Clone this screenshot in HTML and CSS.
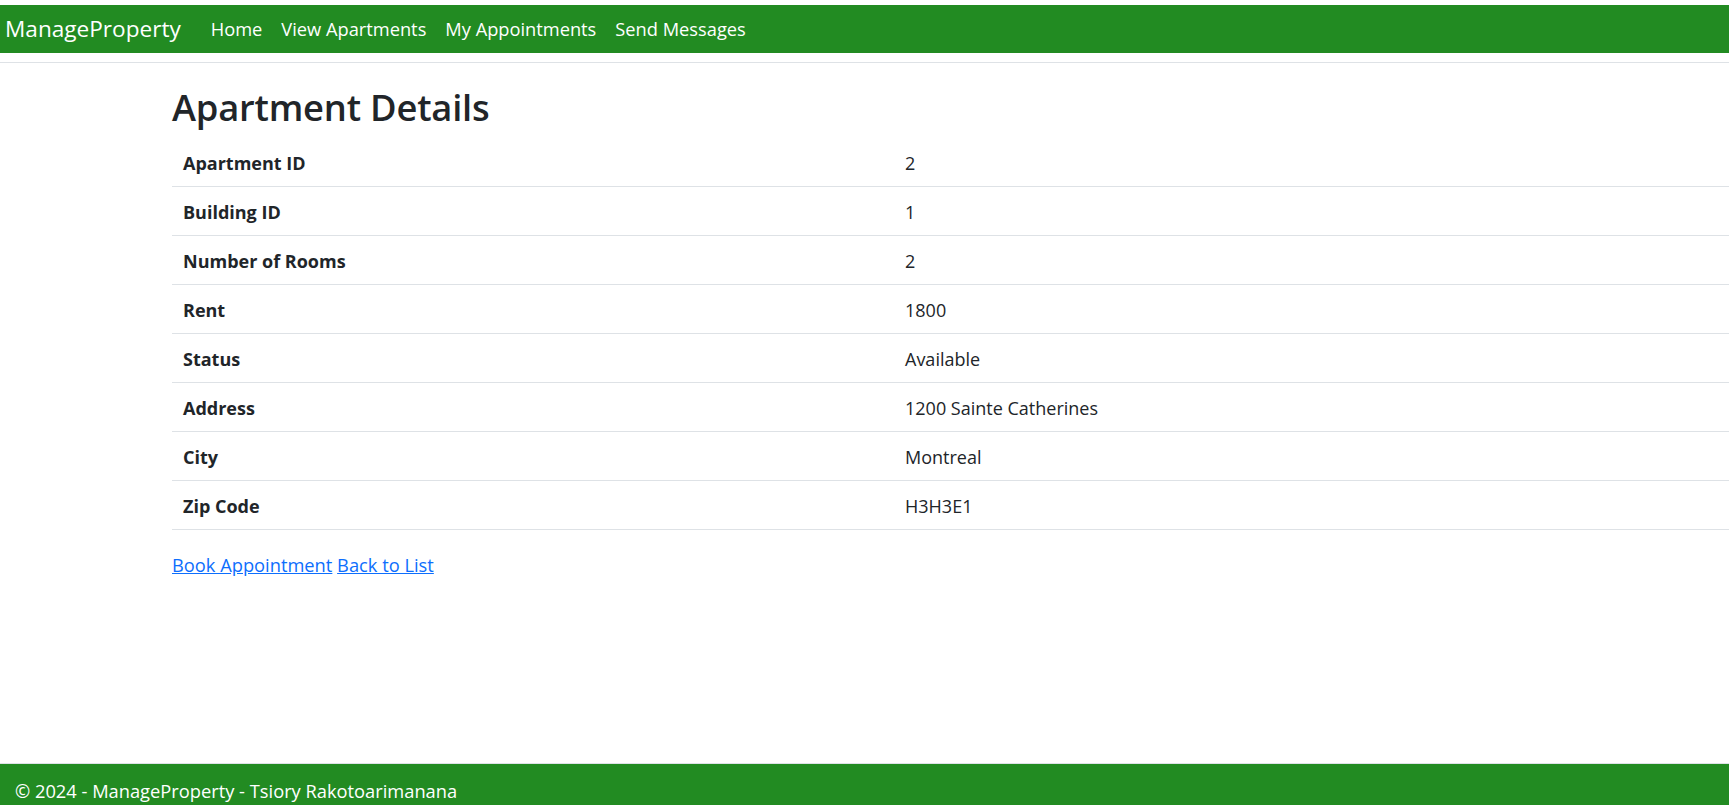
FILE: index.html
```html
<!DOCTYPE html>
<html lang="en">
<head>
<meta charset="utf-8">
<title>Apartment Details - ManageProperty</title>
<link rel="stylesheet" href="styles.css">
</head>
<body>
<header class="site-header">
  <nav class="navbar">
    <a class="brand" href="#">ManageProperty</a>
    <ul class="nav-links">
      <li><a href="#">Home</a></li>
      <li><a href="#">View Apartments</a></li>
      <li><a href="#">My Appointments</a></li>
      <li><a href="#">Send Messages</a></li>
    </ul>
  </nav>
</header>
<main class="content">
  <h1 class="page-title">Apartment Details</h1>
  <table class="details">
    <colgroup><col class="col-label"><col></colgroup>
    <tbody>
      <tr><th>Apartment ID</th><td>2</td></tr>
      <tr><th>Building ID</th><td>1</td></tr>
      <tr><th>Number of Rooms</th><td>2</td></tr>
      <tr><th>Rent</th><td>1800</td></tr>
      <tr><th>Status</th><td>Available</td></tr>
      <tr><th>Address</th><td>1200 Sainte Catherines</td></tr>
      <tr><th>City</th><td>Montreal</td></tr>
      <tr><th>Zip Code</th><td>H3H3E1</td></tr>
    </tbody>
  </table>
  <p class="actions"><a href="#">Book Appointment</a> <a href="#">Back to List</a></p>
</main>
<footer class="site-footer">© 2024 - ManageProperty - Tsiory Rakotoarimanana</footer>
</body>
</html>
```

FILE: styles.css
```css
html, body {
  height: 100%;
}
body {
  margin: 0;
  min-height: 100vh;
  display: flex;
  flex-direction: column;
  font-family: "Open Sans", "Noto Sans", sans-serif;
  font-size: 18px;
  color: #212529;
  background: #fff;
  overflow: hidden;
}
.site-header {
  padding: 5px 0 9px;
  border-bottom: 1px solid #dee2e6;
}
.navbar {
  height: 48px;
  box-sizing: border-box;
  padding: 0 0 1px 5px;
  background: #228b22;
  display: flex;
  align-items: center;
}
.brand {
  color: #fff;
  text-decoration: none;
  font-size: 22.6px;
  margin-right: 30px;
}
.nav-links {
  list-style: none;
  margin: 0;
  padding: 0;
  display: flex;
  gap: 19px;
}
.nav-links a {
  color: #fff;
  text-decoration: none;
  font-size: 18.25px;
}
.content {
  flex: 1;
  padding: 20px 0 0 172px;
}
.page-title {
  margin: 0 0 7px;
  font-size: 36.3px;
  line-height: 48px;
  font-weight: 600;
  letter-spacing: -0.2px;
}
.details {
  width: 100%;
  border-collapse: collapse;
}
.col-label {
  width: 721px;
}
.details th,
.details td {
  padding: 13px 12px 11px 11px;
  line-height: 24px;
  text-align: left;
  vertical-align: top;
  border-bottom: 1px solid #dee2e6;
}
.details th {
  font-weight: 700;
}
.details td {
  padding-left: 12px;
}
.actions {
  margin: 21px 0 0;
  line-height: 27px;
  font-size: 18.3px;
}
.actions a {
  color: #0d6efd;
}
.site-footer {
  height: 42px;
  box-sizing: border-box;
  border-top: 1px solid #dee2e6;
  background: #228b22;
  color: #fff;
  padding: 13px 15px 0;
  line-height: 27px;
  font-size: 18.3px;
  white-space: nowrap;
}
```
